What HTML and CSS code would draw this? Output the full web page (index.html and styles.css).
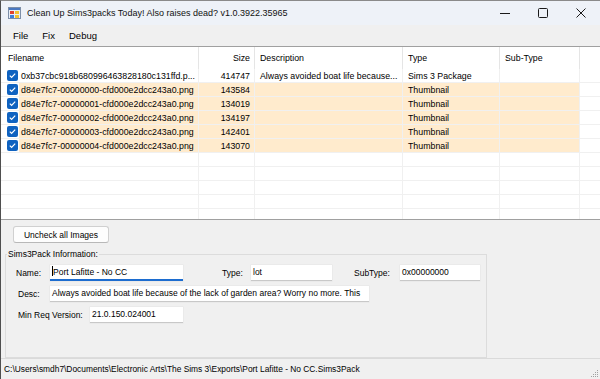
FILE: index.html
```html
<!DOCTYPE html>
<html lang="en">
<head>
    <meta charset="UTF-8">
    <title>Clean Up Sims3packs Today! Also raises dead? v1.0.3922.35965</title>
    <link rel="stylesheet" href="styles.css">
</head>
<body>
    <div class="window">
        <div class="titlebar">
            <svg class="app-icon" width="13" height="12" viewBox="0 0 13 12">
                <rect x="0.5" y="0.5" width="12" height="11" fill="#e8eef6" stroke="#7d8fa8"/>
                <rect x="1" y="1" width="11" height="2" fill="#4a78c0"/>
                <rect x="2" y="4" width="4" height="3" fill="#e0412f"/>
                <rect x="7" y="4" width="4" height="3" fill="#f2c230"/>
                <rect x="2" y="8" width="4" height="3" fill="#3f7fd8"/>
                <rect x="7" y="8" width="4" height="3" fill="#f2c230"/>
            </svg>
            <span class="title">Clean Up Sims3packs Today! Also raises dead? v1.0.3922.35965</span>
            <div class="controls">
                <span class="ctl">
                    <svg width="10" height="10" viewBox="0 0 10 10"><path d="M0 5.5h10" stroke="#1a1a1a" stroke-width="1"/></svg>
                </span>
                <span class="ctl">
                    <svg width="10" height="10" viewBox="0 0 10 10"><rect x="0.5" y="0.5" width="9" height="9" rx="1" fill="none" stroke="#1a1a1a"/></svg>
                </span>
                <span class="ctl">
                    <svg width="10" height="10" viewBox="0 0 10 10"><path d="M0.5 0.5l9 9M9.5 0.5l-9 9" stroke="#1a1a1a" stroke-width="1"/></svg>
                </span>
            </div>
        </div>

        <div class="menubar">
            <span class="menu-item">File</span>
            <span class="menu-item">Fix</span>
            <span class="menu-item">Debug</span>
        </div>

        <div class="listview">
            <div class="lv-header lv-cols">
                <div class="hd first">Filename</div>
                <div class="hd num">Size</div>
                <div class="hd">Description</div>
                <div class="hd">Type</div>
                <div class="hd">Sub-Type</div>
                <div class="hd last"></div>
            </div>
            <div id="rows"></div>
        </div>

        <div class="panel">
            <button class="btn">Uncheck all Images</button>
            <fieldset class="group">
                <legend>Sims3Pack Information:</legend>
                <div class="form-row">
                    <span class="lbl lbl-name">Name:</span>
                    <div class="textbox tb-name focused"><span class="caret"></span>Port Lafitte - No CC</div>
                    <span class="lbl lbl-type">Type:</span>
                    <div class="textbox tb-type">lot</div>
                    <span class="lbl lbl-sub">SubType:</span>
                    <div class="textbox tb-sub">0x00000000</div>
                </div>
                <div class="form-row">
                    <span class="lbl lbl-desc">Desc:</span>
                    <div class="textbox tb-desc">Always avoided boat life because of the lack of garden area? Worry no more. This</div>
                </div>
                <div class="form-row">
                    <span class="lbl lbl-ver">Min Req Version:</span>
                    <div class="textbox tb-ver">21.0.150.024001</div>
                </div>
            </fieldset>
        </div>

        <div class="statusbar">
            <span>C:\Users\smdh7\Documents\Electronic Arts\The Sims 3\Exports\Port Lafitte - No CC.Sims3Pack</span>
            <svg class="grip" width="10" height="10" viewBox="0 0 10 10">
                <rect x="8" y="2" width="1" height="1" fill="#a0a0a0"/>
                <rect x="6" y="4" width="1" height="1" fill="#a0a0a0"/>
                <rect x="8" y="4" width="1" height="1" fill="#a0a0a0"/>
                <rect x="4" y="6" width="1" height="1" fill="#a0a0a0"/>
                <rect x="6" y="6" width="1" height="1" fill="#a0a0a0"/>
                <rect x="8" y="6" width="1" height="1" fill="#a0a0a0"/>
                <rect x="2" y="8" width="1" height="1" fill="#a0a0a0"/>
                <rect x="4" y="8" width="1" height="1" fill="#a0a0a0"/>
                <rect x="6" y="8" width="1" height="1" fill="#a0a0a0"/>
                <rect x="8" y="8" width="1" height="1" fill="#a0a0a0"/>
            </svg>
        </div>
    </div>

    <script>
        const files = [
            { name: '0xb37cbc918b680996463828180c131ffd.p...', size: '414747', desc: 'Always avoided boat life because...', type: 'Sims 3 Package', image: false },
            { name: 'd84e7fc7-00000000-cfd000e2dcc243a0.png', size: '143584', desc: '', type: 'Thumbnail', image: true },
            { name: 'd84e7fc7-00000001-cfd000e2dcc243a0.png', size: '134019', desc: '', type: 'Thumbnail', image: true },
            { name: 'd84e7fc7-00000002-cfd000e2dcc243a0.png', size: '134197', desc: '', type: 'Thumbnail', image: true },
            { name: 'd84e7fc7-00000003-cfd000e2dcc243a0.png', size: '142401', desc: '', type: 'Thumbnail', image: true },
            { name: 'd84e7fc7-00000004-cfd000e2dcc243a0.png', size: '143070', desc: '', type: 'Thumbnail', image: true }
        ];
        const rows = document.getElementById('rows');
        const check = '<span class="chk"><svg width="9" height="9" viewBox="0 0 9 9"><path d="M1.8 4.6l1.8 1.8 3.6-3.8" fill="none" stroke="#fff" stroke-width="1.2"/></svg></span>';

        // file rows, then empty grid rows to fill the list
        files.forEach(f => {
            const row = document.createElement('div');
            row.className = 'lv-row lv-cols' + (f.image ? ' hl' : '');
            row.innerHTML =
                `<div class="c cb">${check}</div>` +
                `<div class="c name">${f.name}</div>` +
                `<div class="c num">${f.size}</div>` +
                `<div class="c">${f.desc}</div>` +
                `<div class="c">${f.type}</div>` +
                `<div class="c"></div>` +
                `<div class="c last"></div>`;
            rows.appendChild(row);
        });
        for (let i = 0; i < 5; i++) {
            const row = document.createElement('div');
            row.className = 'lv-row lv-cols empty';
            row.innerHTML = '<div class="c cb"></div><div class="c name"></div><div class="c"></div><div class="c"></div><div class="c"></div><div class="c"></div><div class="c last"></div>';
            rows.appendChild(row);
        }
    </script>
</body>
</html>
```

FILE: styles.css
```css
body {
    margin: 0;
    font-family: "Liberation Sans", Arial, sans-serif;
    font-size: 8.5px;
    color: #000;
}
.window {
    width: 600px;
    height: 379px;
    box-sizing: border-box;
    border-top: 1px solid #8a8a8a;
    border-left: 1px solid #4f4f4f;
    background-color: #f0f0f0;
    display: flex;
    flex-direction: column;
    overflow: hidden;
}

/* title bar */
.titlebar {
    height: 24px;
    flex-shrink: 0;
    background-color: #eef2f8;
    display: flex;
    align-items: center;
}
.app-icon {
    margin-left: 7px;
}
.title {
    margin-left: 6px;
    font-size: 9px;
    color: #111;
}
.controls {
    margin-left: auto;
    display: flex;
    height: 100%;
}
.ctl {
    width: 38px;
    display: flex;
    align-items: center;
    justify-content: center;
}

/* menu */
.menubar {
    height: 21px;
    flex-shrink: 0;
    display: flex;
    align-items: center;
    padding-left: 5px;
    background-color: #f0f0f0;
}
.menu-item {
    padding: 0 7px;
    font-size: 9.5px;
}

/* list view */
.listview {
    height: 172px;
    flex-shrink: 0;
    background-color: #fff;
    border-top: 1px solid #a0a0a0;
    border-bottom: 1px solid #a0a0a0;
    overflow: hidden;
    font-size: 8.8px;
}
.lv-cols {
    display: grid;
    grid-template-columns: 18px 180px 56px 148px 97px 80px 1fr;
}
.lv-header {
    grid-template-columns: 198px 56px 148px 97px 80px 1fr;
    height: 22px;
}
.hd {
    display: flex;
    align-items: center;
    padding: 0 5px;
    border-right: 1px solid #e5e5e5;
    white-space: nowrap;
}
.hd.first {
    padding-left: 7px;
}
.hd.num {
    justify-content: flex-end;
    padding-right: 4px;
}
.hd.last {
    border-right: none;
}
.lv-row {
    height: 14px;
}
.c {
    box-sizing: border-box;
    height: 14px;
    line-height: 14px;
    padding: 0 5px;
    border-bottom: 1px solid #f0f0f0;
    border-right: 1px solid #f0f0f0;
    white-space: nowrap;
    overflow: hidden;
}
.c.cb {
    padding: 0 0 0 6px;
    border-right: none;
    display: flex;
    align-items: center;
}
.c.name {
    padding-left: 2px;
}
.c.num {
    text-align: right;
    padding-right: 4px;
}
.c.last {
    border-right: none;
}
.lv-row.hl .c {
    background-color: #ffebcd;
}
.lv-row.hl .c.cb,
.lv-row.hl .c.last {
    background-color: #fff;
}
.chk {
    width: 11px;
    height: 11px;
    border-radius: 2px;
    background-color: #0f62c0;
    display: flex;
    align-items: center;
    justify-content: center;
}

/* lower panel */
.panel {
    flex: 1;
    padding: 6px 0 0 0;
}
.btn {
    display: block;
    margin-left: 12px;
    width: 96px;
    height: 17px;
    padding: 0;
    font-family: inherit;
    font-size: 8.5px;
    color: #000;
    background-color: #fdfdfd;
    border: 1px solid #d0d0d0;
    border-bottom-color: #b8b8b8;
    border-radius: 3px;
}
.group {
    margin: 6px 0 0 4px;
    width: 482px;
    height: 109px;
    box-sizing: border-box;
    border: 1px solid #dcdcdc;
    padding: 6px 0 0 0;
}
.group legend {
    padding: 0 1px;
    margin-left: 1px;
    font-size: 8.5px;
    line-height: 10px;
}
.form-row {
    display: flex;
    align-items: center;
    height: 16px;
    margin-bottom: 5px;
}
.lbl {
    white-space: nowrap;
}
.lbl-name { margin-left: 10px; width: 34px; }
.lbl-type { margin-left: 39px; width: 29px; }
.lbl-sub  { margin-left: 22px; width: 46px; }
.lbl-desc { margin-left: 12px; width: 32px; }
.lbl-ver  { margin-left: 12px; width: 72px; }
.textbox {
    box-sizing: border-box;
    height: 16px;
    line-height: 15px;
    padding: 0 2px;
    background-color: #fff;
    border-bottom: 1px solid #c8c8c8;
    box-shadow: 0 0 0 0.5px #e3e3e3;
    white-space: nowrap;
    overflow: hidden;
}
.textbox.focused {
    border-bottom: 2px solid #1c6ccf;
}
.caret {
    display: inline-block;
    width: 1px;
    height: 10px;
    vertical-align: -1px;
    background-color: #000;
}
.tb-name { width: 133px; }
.tb-type { width: 81px; }
.tb-sub  { width: 80px; }
.tb-desc { width: 319px; }
.tb-ver  { width: 93px; }

/* status bar */
.statusbar {
    height: 20px;
    flex-shrink: 0;
    border-top: 1px solid #dadada;
    display: flex;
    align-items: center;
    padding-left: 3px;
    position: relative;
    font-size: 8.4px;
}
.grip {
    position: absolute;
    right: 1px;
    bottom: 1px;
}
```
